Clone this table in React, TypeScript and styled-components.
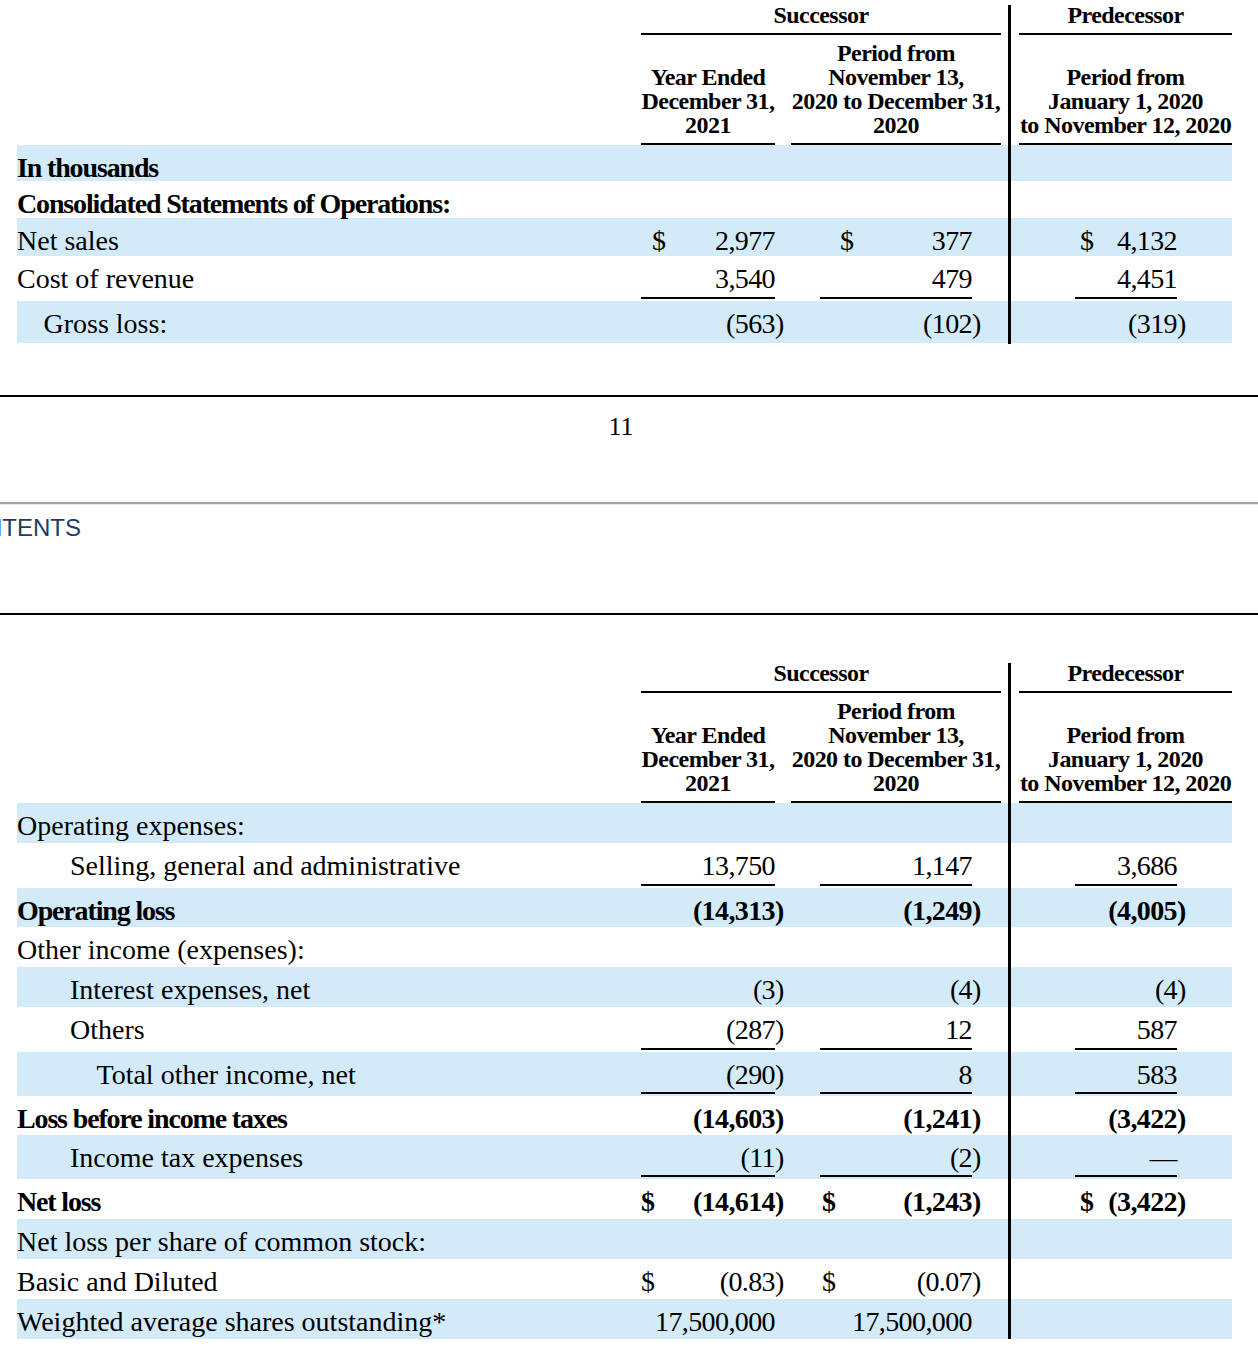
import React from 'react';
import styled, { createGlobalStyle } from 'styled-components';

const GlobalStyle = createGlobalStyle`
  html, body {
    margin: 0;
    padding: 0;
    background: #fff;
  }
  body {
    font-family: "Liberation Serif", "Times New Roman", serif;
    color: #000;
  }
`;

const SHADE = '#d3eaf9';
// label | amt1 | ) | gap | amt2 | ) | rule | gap | amt3 | )
const DATA_COLS = '624px 134px 16px 29px 152px 36px 3px 64px 102px 55px';
// label | head1 | gap | head2 | gap | rule | gap | head3
const HEAD_COLS = '624px 134px 16px 210px 7px 3px 8px 213px';

const Page = styled.div`
  width: 1258px;
  overflow: hidden;
`;

const Sheet = styled.section<{ $top: number }>`
  margin: ${(p) => p.$top}px 0 0 17px;
  width: 1215px;
`;

const HeadRow = styled.div`
  display: grid;
  grid-template-columns: ${HEAD_COLS};
  font-size: 24px;
  font-weight: 700;
  letter-spacing: -0.55px;
  text-align: center;
`;

const GroupTitle = styled.div<{ $span: string }>`
  grid-column: ${(p) => p.$span};
  line-height: 20px;
  padding-bottom: 8px;
  border-bottom: 2px solid #000;
  white-space: nowrap;
`;

const ColTitle = styled.div`
  display: flex;
  flex-direction: column;
  justify-content: flex-end;
  line-height: 24px;
  padding: 6px 0;
  border-bottom: 2px solid #000;
  white-space: nowrap;
`;

const Divider = styled.div`
  background: #000;
`;

const Blank = styled.div``;

const Row = styled.div<{ $shade?: boolean; $bold?: boolean; $h: number }>`
  display: grid;
  grid-template-columns: ${DATA_COLS};
  height: ${(p) => p.$h}px;
  background: ${(p) => (p.$shade ? SHADE : 'transparent')};
  font-size: 28px;
  line-height: 32px;
  font-weight: ${(p) => (p.$bold ? 700 : 400)};
`;

const Label = styled.div<{ $indent: number; $bold?: boolean }>`
  padding: 7px 0 0 ${(p) => p.$indent * 26.5}px;
  white-space: nowrap;
  letter-spacing: ${(p) => (p.$bold ? '-1.15px' : '0')};
`;

const AmountCell = styled.div<{ $rule?: boolean }>`
  display: flex;
  padding-top: 7px;
  margin-bottom: 2px;
  border-bottom: 2px solid ${(p) => (p.$rule ? '#000' : 'transparent')};
  letter-spacing: -0.6px;
  white-space: nowrap;
`;

const Dollar = styled.span<{ $offset: number }>`
  margin-left: ${(p) => p.$offset}px;
`;

const Figure = styled.span`
  margin-left: auto;
`;

const Paren = styled.div`
  padding-top: 7px;
`;

const PageFoot = styled.footer`
  box-sizing: border-box;
  height: 107px;
  margin-top: 52px;
  padding: 16px 16px 0 0;
  border-top: 2px solid #000;
  text-align: center;
  font-size: 26px;
  line-height: 28px;
`;

const PageHead = styled.header`
  box-sizing: border-box;
  height: 113px;
  padding-top: 11px;
  border-top: 2px solid #a5a5a5;
  border-bottom: 2px solid #000;
  box-shadow: inset 0 1px 0 #e9e9e9;
`;

const TocLink = styled.span`
  display: block;
  margin-left: -172px;
  font-family: "Liberation Sans", Arial, sans-serif;
  font-size: 24px;
  line-height: 26px;
  color: #1f3a68;
  white-space: nowrap;
`;

type Amount = { v?: string; neg?: boolean; cur?: number; rule?: boolean };
type Line = {
  label: string;
  h: number;
  indent?: number;
  bold?: boolean;
  shade?: boolean;
  cols?: Amount[];
};

const firstTable: Line[] = [
  { label: 'In thousands', h: 36, bold: true, shade: true },
  { label: 'Consolidated Statements of Operations:', h: 37, bold: true },
  {
    label: 'Net sales',
    h: 38,
    shade: true,
    cols: [
      { v: '2,977', cur: 11 },
      { v: '377', cur: 20 },
      { v: '4,132', cur: 5 },
    ],
  },
  {
    label: 'Cost of revenue',
    h: 45,
    cols: [
      { v: '3,540', rule: true },
      { v: '479', rule: true },
      { v: '4,451', rule: true },
    ],
  },
  {
    label: 'Gross loss:',
    h: 42,
    indent: 1,
    shade: true,
    cols: [
      { v: '563', neg: true },
      { v: '102', neg: true },
      { v: '319', neg: true },
    ],
  },
];

const secondTable: Line[] = [
  { label: 'Operating expenses:', h: 40, shade: true },
  {
    label: 'Selling, general and administrative',
    h: 45,
    indent: 2,
    cols: [
      { v: '13,750', rule: true },
      { v: '1,147', rule: true },
      { v: '3,686', rule: true },
    ],
  },
  {
    label: 'Operating loss',
    h: 39,
    bold: true,
    shade: true,
    cols: [
      { v: '14,313', neg: true },
      { v: '1,249', neg: true },
      { v: '4,005', neg: true },
    ],
  },
  { label: 'Other income (expenses):', h: 40 },
  {
    label: 'Interest expenses, net',
    h: 40,
    indent: 2,
    shade: true,
    cols: [
      { v: '3', neg: true },
      { v: '4', neg: true },
      { v: '4', neg: true },
    ],
  },
  {
    label: 'Others',
    h: 45,
    indent: 2,
    cols: [
      { v: '287', neg: true, rule: true },
      { v: '12', rule: true },
      { v: '587', rule: true },
    ],
  },
  {
    label: 'Total other income, net',
    h: 44,
    indent: 3,
    shade: true,
    cols: [
      { v: '290', neg: true, rule: true },
      { v: '8', rule: true },
      { v: '583', rule: true },
    ],
  },
  {
    label: 'Loss before income taxes',
    h: 39,
    bold: true,
    cols: [
      { v: '14,603', neg: true },
      { v: '1,241', neg: true },
      { v: '3,422', neg: true },
    ],
  },
  {
    label: 'Income tax expenses',
    h: 44,
    indent: 2,
    shade: true,
    cols: [
      { v: '11', neg: true, rule: true },
      { v: '2', neg: true, rule: true },
      { v: '—', rule: true },
    ],
  },
  {
    label: 'Net loss',
    h: 40,
    bold: true,
    cols: [
      { v: '14,614', neg: true, cur: 0 },
      { v: '1,243', neg: true, cur: 2 },
      { v: '3,422', neg: true, cur: 5 },
    ],
  },
  { label: 'Net loss per share of common stock:', h: 40, shade: true },
  {
    label: 'Basic and Diluted',
    h: 40,
    cols: [{ v: '0.83', neg: true, cur: 0 }, { v: '0.07', neg: true, cur: 2 }, {}],
  },
  {
    label: 'Weighted average shares outstanding*',
    h: 40,
    shade: true,
    cols: [{ v: '17,500,000' }, { v: '17,500,000' }, {}],
  },
];

const AmountPair: React.FC<{ a?: Amount }> = ({ a = {} }) => (
  <>
    <AmountCell $rule={a.rule}>
      {a.cur !== undefined && <Dollar $offset={a.cur}>$</Dollar>}
      {a.v && <Figure>{a.neg ? `(${a.v}` : a.v}</Figure>}
    </AmountCell>
    <Paren>{a.neg ? ')' : ''}</Paren>
  </>
);

const DataRow: React.FC<{ line: Line }> = ({ line }) => {
  const [c1, c2, c3] = line.cols ?? [];
  return (
    <Row $h={line.h} $shade={line.shade} $bold={line.bold}>
      <Label $indent={line.indent ?? 0} $bold={line.bold}>
        {line.label}
      </Label>
      <AmountPair a={c1} />
      <Blank />
      <AmountPair a={c2} />
      <Divider />
      <Blank />
      <AmountPair a={c3} />
    </Row>
  );
};

const TableHead: React.FC = () => (
  <>
    <HeadRow>
      <Blank />
      <GroupTitle $span="2 / 5">Successor</GroupTitle>
      <Blank />
      <Divider />
      <Blank />
      <GroupTitle $span="8 / 9">Predecessor</GroupTitle>
    </HeadRow>
    <HeadRow>
      <Blank />
      <ColTitle>
        <span>Year Ended</span>
        <span>December 31,</span>
        <span>2021</span>
      </ColTitle>
      <Blank />
      <ColTitle>
        <span>Period from</span>
        <span>November 13,</span>
        <span>2020 to December 31,</span>
        <span>2020</span>
      </ColTitle>
      <Blank />
      <Divider />
      <Blank />
      <ColTitle>
        <span>Period from</span>
        <span>January 1, 2020</span>
        <span>to November 12, 2020</span>
      </ColTitle>
    </HeadRow>
  </>
);

const Statement: React.FC<{ lines: Line[]; top: number }> = ({ lines, top }) => (
  <Sheet $top={top}>
    <TableHead />
    {lines.map((line) => (
      <DataRow key={line.label} line={line} />
    ))}
  </Sheet>
);

export default function App() {
  return (
    <Page>
      <GlobalStyle />
      <Statement lines={firstTable} top={5} />
      <PageFoot>11</PageFoot>
      <PageHead>
        <TocLink>TABLE OF CONTENTS</TocLink>
      </PageHead>
      <Statement lines={secondTable} top={48} />
    </Page>
  );
}
